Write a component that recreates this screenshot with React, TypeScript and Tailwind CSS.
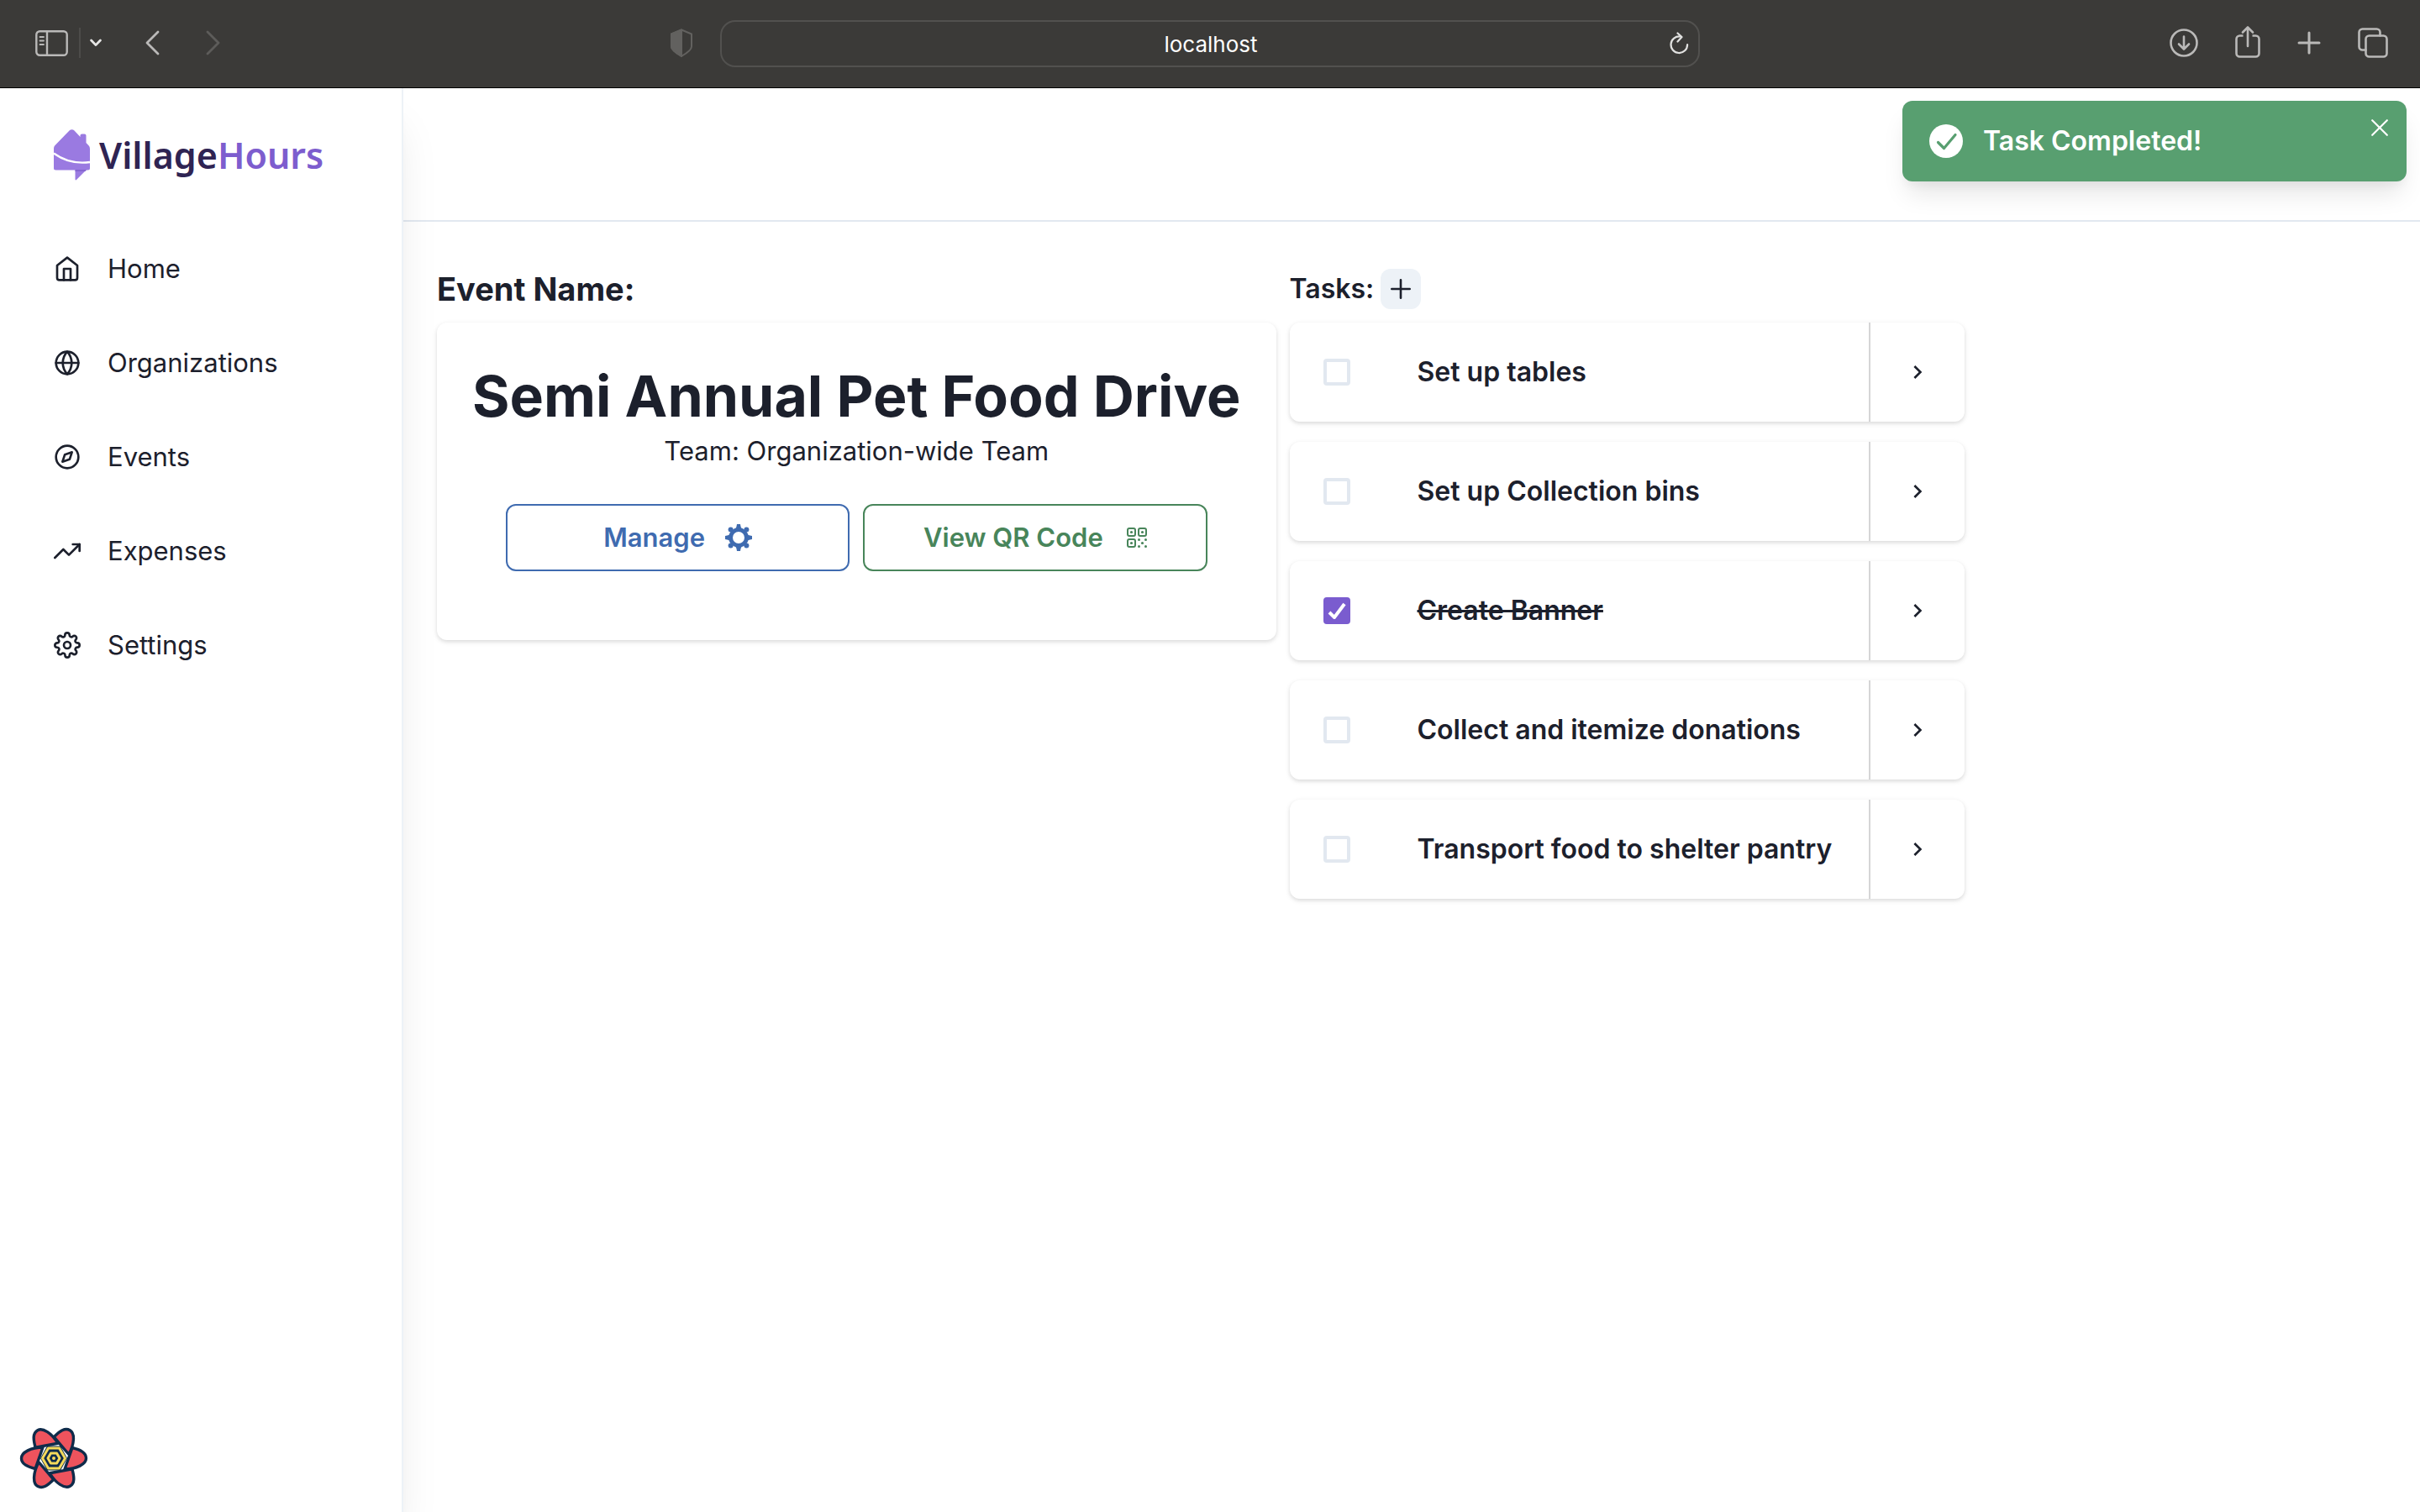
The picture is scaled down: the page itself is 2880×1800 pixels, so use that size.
import React from "react";
import { FiHome, FiTrendingUp, FiCompass, FiSettings, FiGlobe } from "react-icons/fi";
import { MdChevronRight } from "react-icons/md";

const navItems = [
  { label: "Home", Icon: FiHome },
  { label: "Organizations", Icon: FiGlobe },
  { label: "Events", Icon: FiCompass },
  { label: "Expenses", Icon: FiTrendingUp },
  { label: "Settings", Icon: FiSettings },
];

const tasks = [
  { label: "Set up tables", done: false },
  { label: "Set up Collection bins", done: false },
  { label: "Create Banner", done: true },
  { label: "Collect and itemize donations", done: false },
  { label: "Transport food to shelter pantry", done: false },
];

const iconStroke = {
  fill: "none",
  stroke: "currentColor",
  strokeLinecap: "round" as const,
  strokeLinejoin: "round" as const,
};

function BrowserBar() {
  return (
    <header className="grid h-[105px] shrink-0 grid-cols-[1fr_1166px_1fr] items-center border-b border-black bg-[#3b3a38] text-[#bab9b8]">
      <div className="flex items-center pb-0.5 pl-[42px]">
        <button aria-label="Toggle sidebar">
          <svg width="39" height="31" viewBox="0 0 39 31" {...iconStroke} strokeWidth="2.4">
            <rect x="1.3" y="1.3" width="36.4" height="28.4" rx="4" />
            <path d="M14 1.5v28" />
            <path d="M5.5 8h4.5M5.5 12.5h4.5M5.5 17h4.5" strokeWidth="1.8" />
          </svg>
        </button>
        <span className="ml-[13px] h-9 w-0.5 bg-[#4d4c4a]" />
        <button aria-label="Tab groups" className="ml-[11px] text-[#e6e6e5]">
          <svg width="14" height="10" viewBox="0 0 14 10" {...iconStroke} strokeWidth="2.8">
            <path d="M1.6 2l5.4 5.6L12.4 2" />
          </svg>
        </button>
        <button aria-label="Back" className="ml-[52px]">
          <svg width="17" height="30" viewBox="0 0 17 30" {...iconStroke} strokeWidth="2.8">
            <path d="M15 2L2 15l13 13" />
          </svg>
        </button>
        <button aria-label="Forward" className="ml-[55px] text-[#5d5c5a]">
          <svg width="17" height="30" viewBox="0 0 17 30" {...iconStroke} strokeWidth="2.8">
            <path d="M2 2l13 13L2 28" />
          </svg>
        </button>
        <span className="flex-1" />
        <button aria-label="Privacy report" className="mr-8 text-[#62615f]">
          <svg width="28" height="34" viewBox="0 0 28 34" {...iconStroke} strokeWidth="2">
            <path d="M14 1.5L26 6.500v15c0 4-6 8-12 11.500C8 29.500 2 25.500 2 21.500v-15z" />
            <path d="M14 1.5L2 6.500v15c0 4 6 8 12 11.500z" fill="currentColor" />
          </svg>
        </button>
      </div>
      <div className="flex h-14 items-center rounded-[18px] border-2 border-[#52514f] px-2.5 focus-within:border-[#777]">
        <input
          aria-label="Address"
          defaultValue="localhost"
          className="min-w-0 flex-1 bg-transparent pl-[28px] text-center text-[26px] text-white outline-none"
        />
        <button aria-label="Reload" className="text-[#e1e1e0]">
          <svg width="26" height="28" viewBox="0 0 26 28" {...iconStroke} strokeWidth="2.2">
            <path d="M14.5 5.5a9.8 9.8 0 1 0 8.600 9.700" />
            <path d="M11.5 1.5l5 4.500-5 5.500" />
          </svg>
        </button>
      </div>
      <div className="flex items-center justify-end gap-11 pr-[38px] pb-0.5">
        <button aria-label="Downloads">
          <svg width="34" height="34" viewBox="0 0 34 34" {...iconStroke} strokeWidth="2.6">
            <circle cx="17" cy="17" r="15.500" />
            <path d="M17 9.500v14.500M11 18.500l6 6 6-6" />
          </svg>
        </button>
        <button aria-label="Share">
          <svg width="30" height="40" viewBox="0 0 30 40" {...iconStroke} strokeWidth="2.6">
            <path
              d="M9.500 11.500H5.500a4 4 0 0 0-4 4v17a4 4 0 0 0 4 4h19a4 4 0 0 0 4-4v-17a4 4 0 0 0-4-4h-4"
              strokeLinecap="butt"
            />
            <path d="M15 24V2M9 7.500l6-6 6 6" />
          </svg>
        </button>
        <button aria-label="New tab">
          <svg width="28" height="28" viewBox="0 0 28 28" {...iconStroke} strokeWidth="3">
            <path d="M14 2v24M2 14h24" />
          </svg>
        </button>
        <button aria-label="Tab overview">
          <svg width="36" height="36" viewBox="0 0 36 36" {...iconStroke} strokeWidth="2.600">
            <rect x="9.500" y="9.500" width="25" height="25" rx="4" />
            <path d="M9.500 26.500H5.500a4 4 0 0 1-4-4v-17a4 4 0 0 1 4-4h17a4 4 0 0 1 4 4v4" />
          </svg>
        </button>
      </div>
    </header>
  );
}

function Logo() {
  return (
    <a href="#home" className="flex items-center gap-2.5" aria-label="VillageHours">
      <svg width="44" height="62" viewBox="0 0 44 62">
        <path
          d="M0 23c0-2 .6-3.200 2-4.600L18.500 1.600c1.800-1.800 4.200-1.800 6 0L31.500 9V7.500c0-1.200.8-2 2-2h3c1.200 0 2 .8 2 2V16l2.800 3c1.300 1.400 1.700 2.600 1.700 4.500V46c0 1.800-.7 2.500-2.500 2.500h-38C.7 48.500 0 47.800 0 46z"
          fill="#9a7ae1"
        />
        <path d="M25.500 48.500h13L27 60c-.8.700-1.500.4-1.500-.6z" fill="#9a7ae1" />
        <path d="M25.500 48h13.500l-1.500 2h-12z" fill="#8566d0" />
        <path d="M0 28.500c13 9.500 28 12.500 43 10.500" fill="none" stroke="#fff" strokeWidth="2.400" />
      </svg>
      <span className="font-['Noto_Sans',sans-serif] text-[43px] leading-[60px] font-semibold text-[#2f2453]">
        Village<span className="text-[#7d5dce]">Hours</span>
      </span>
    </a>
  );
}

function QueryDevtoolsLogo() {
  return (
    <svg width="82" height="74" viewBox="0 0 82 74">
      <g stroke="#0f2b4a" strokeWidth="3.400" strokeLinejoin="round" fill="#ee535d">
        {[0, 60, 120, 180, 240, 300].map((angle) => (
          <path key={angle} transform={`rotate(${angle} 41 37)`} d="M28 24C14 24 2.500 30 2.500 37s7 10 16.500 12.500z" />
        ))}
      </g>
      <path d="M33 22.500h16l8 14.500-8 14.500H33L25 37z" fill="#0f2b4a" />
      <g fill="none" stroke="#f4d95b" strokeWidth="3" strokeLinejoin="round">
        <path d="M34.500 25h13l7 12-7 12h-13l-7-12z" />
        <path d="M37.500 31h7l3.500 6-3.500 6h-7L34 37z" />
      </g>
      <circle cx="41" cy="37" r="2" fill="#f4d95b" />
    </svg>
  );
}

function GearIcon() {
  return (
    <svg width="32" height="32" viewBox="0 0 32 32" fill="currentColor">
      <circle cx="16" cy="16" r="9.400" fill="none" stroke="currentColor" strokeWidth="4.800" />
      {[0, 90, 180, 270].map((angle) => (
        <g key={angle} transform={`rotate(${angle} 16 16)`}>
          <path d="M10.500 6.500C13 5.500 13.500 3.500 14 0h4c.5 3.500 1 5.500 3.500 6.500z" />
          <circle cx="25.400" cy="6.600" r="3" />
        </g>
      ))}
    </svg>
  );
}

function QrIcon() {
  return (
    <svg width="24" height="24" viewBox="0 0 24 24" fill="currentColor">
      <g fill="none" stroke="currentColor" strokeWidth="2">
        <rect x="1" y="1" width="9" height="9" rx="2" />
        <rect x="14" y="1" width="9" height="9" rx="2" />
        <rect x="1" y="14" width="9" height="9" rx="2" />
      </g>
      <circle cx="5.500" cy="5.500" r="1.600" />
      <circle cx="18.500" cy="5.500" r="1.600" />
      <circle cx="5.500" cy="18.500" r="1.600" />
      <circle cx="14.500" cy="14.500" r="1.500" />
      <circle cx="22.500" cy="14.500" r="1.500" />
      <circle cx="18.500" cy="18.500" r="1.600" />
      <circle cx="14.500" cy="22.500" r="1.500" />
      <circle cx="22.500" cy="22.500" r="1.500" />
    </svg>
  );
}

function Sidebar() {
  return (
    <aside className="relative z-10 flex w-[480px] shrink-0 flex-col border-r-2 border-[#edf2f7] bg-white shadow-[0_40px_50px_-10px_rgba(0,0,0,0.1),0_20px_20px_-10px_rgba(0,0,0,0.04)]">
      <div className="px-16 pt-[49px]">
        <Logo />
      </div>
      <nav className="mt-12 flex flex-col">
        {navItems.map(({ label, Icon }) => (
          <a key={label} href={"#" + label.toLowerCase()} className="flex h-28 items-center gap-8 px-16 text-[31px]">
            <Icon size={32} />
            {label}
          </a>
        ))}
      </nav>
      <button aria-label="Open query devtools" className="mt-auto mb-[27px] ml-[23px] self-start">
        <QueryDevtoolsLogo />
      </button>
    </aside>
  );
}

function EventCard() {
  return (
    <section>
      <h2 className="flex h-20 items-center text-[38px] font-bold">Event Name:</h2>
      <div className="rounded-xl bg-white px-[42px] pt-11 pb-[82px] text-center shadow-[0_2px_6px_rgba(0,0,0,0.1),0_2px_4px_rgba(0,0,0,0.06)]">
        <h1 className="text-[68px] leading-[86px] font-bold whitespace-nowrap">Semi Annual Pet Food Drive</h1>
        <p className="text-[31px] leading-[46px]">Team: Organization-wide Team</p>
        <div className="mx-10 mt-10 grid grid-cols-2 gap-4 text-[31px] font-semibold">
          <button className="flex h-20 items-center justify-center gap-6 rounded-xl border-2 border-[#3f6bb0] text-[#3f6bb0]">
            Manage
            <GearIcon />
          </button>
          <button className="flex h-20 items-center justify-center gap-7 rounded-xl border-2 border-[#48855a] text-[#48855a]">
            View QR Code
            <QrIcon />
          </button>
        </div>
      </div>
    </section>
  );
}

function TaskRow({ label, done }: { label: string; done: boolean }) {
  return (
    <li className="flex h-[118px] rounded-xl bg-white shadow-[0_2px_6px_rgba(0,0,0,0.1),0_2px_4px_rgba(0,0,0,0.06)]">
      <label className="flex flex-1 items-center gap-20 pr-11 pl-10 text-[32px] font-semibold">
        <span className="grid place-items-center">
          <input
            type="checkbox"
            defaultChecked={done}
            className="peer col-start-1 row-start-1 size-8 appearance-none rounded-sm border-4 border-[#e2e8f0] checked:border-[#7a5ccf] checked:bg-[#7a5ccf]"
          />
          <svg
            width="24"
            height="20"
            viewBox="0 0 12 10"
            fill="none"
            stroke="currentColor"
            strokeWidth="2"
            className="pointer-events-none invisible col-start-1 row-start-1 text-white peer-checked:visible"
          >
            <path d="M1.500 6l3 3 6-8" />
          </svg>
        </span>
        <span className={done ? "whitespace-nowrap line-through" : "whitespace-nowrap"}>{label}</span>
      </label>
      <button
        aria-label={"Open " + label}
        className="flex w-[114px] items-center justify-center border-l-2 border-[#d5d5d6]"
      >
        <MdChevronRight size={32} />
      </button>
    </li>
  );
}

function TaskList() {
  return (
    <section>
      <div className="flex h-20 items-center gap-2">
        <h2 className="text-[32px] font-semibold">Tasks:</h2>
        <button aria-label="Add task" className="flex size-12 items-center justify-center rounded-xl bg-[#edf2f7]">
          <svg width="24" height="24" viewBox="0 0 24 24" {...iconStroke} strokeWidth="2.600">
            <path d="M12 1.300v21.400M1.300 12h21.400" />
          </svg>
        </button>
      </div>
      <ul className="flex flex-col gap-6">
        {tasks.map((task) => (
          <TaskRow key={task.label} {...task} />
        ))}
      </ul>
    </section>
  );
}

function Toast() {
  return (
    <div
      role="status"
      className="absolute top-[15px] right-4 z-20 flex h-24 w-[600px] items-center gap-6 rounded-xl bg-[#589f70] px-8 text-white shadow-[0_20px_30px_-6px_rgba(0,0,0,0.1),0_8px_12px_-4px_rgba(0,0,0,0.05)]"
    >
      <svg width="40" height="40" viewBox="0 0 40 40">
        <circle cx="20" cy="20" r="20" fill="#fff" />
        <path
          d="M10.500 21.500l7 7L31 12.500"
          fill="none"
          stroke="#589f70"
          strokeWidth="3.200"
          strokeLinecap="round"
          strokeLinejoin="round"
        />
      </svg>
      <span className="text-[32px] font-semibold">Task Completed!</span>
      <button aria-label="Close" className="absolute top-[22px] right-[22px]">
        <svg width="20" height="20" viewBox="0 0 20 20" {...iconStroke} strokeWidth="2.200">
          <path d="M1.200 1.200l17.600 17.600M18.800 1.200L1.200 18.800" />
        </svg>
      </button>
    </div>
  );
}

export default function App() {
  return (
    <div className="flex min-h-screen flex-col bg-white font-['Inter',sans-serif] text-[#1c202c]">
      <BrowserBar />
      <div className="relative flex flex-1">
        <Sidebar />
        <div className="flex min-w-0 flex-1 flex-col">
          <div className="h-[159px] shrink-0 border-b-2 border-[#e2e8f0]" />
          <main className="flex items-start gap-4 p-10">
            <EventCard />
            <TaskList />
          </main>
        </div>
        <Toast />
      </div>
    </div>
  );
}
